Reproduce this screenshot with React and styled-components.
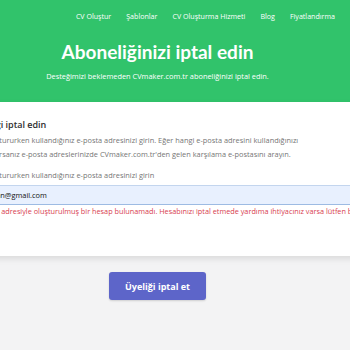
import React from "react";
import styled, { createGlobalStyle } from "styled-components";

const GlobalStyle = createGlobalStyle`
  html, body {
    margin: 0;
    padding: 0;
    background: #f3f3f4;
    overflow: hidden;
  }
  body {
    font-family: "Open Sans", "Noto Sans", sans-serif;
  }
`;

const navItems = [
  "CV Oluştur",
  "Şablonlar",
  "CV Oluşturma Hizmeti",
  "Blog",
  "Fiyatlandırma",
];

export default function App() {
  return (
    <>
      <GlobalStyle />
      <Page>
        <Header>
          <Nav>
            {navItems.map((item) => (
              <NavLink key={item}>{item}</NavLink>
            ))}
          </Nav>
          <Hero>
            <Title>Aboneliğinizi iptal edin</Title>
            <Subtitle>
              Desteğimizi beklemeden CVmaker.com.tr aboneliğinizi iptal edin.
            </Subtitle>
          </Hero>
        </Header>

        <Card>
          <CardTitle>Üyeliği iptal edin</CardTitle>
          <Text>
            CV oluştururken kullandığınız e-posta adresinizi girin. Eğer hangi
            e-posta adresini kullandığınızı
            <br />
            bilmiyorsanız e-posta adreslerinizde CVmaker.com.tr'den gelen
            karşılama e-postasını arayın.
          </Text>
          <Label htmlFor="email">
            CV oluştururken kullandığınız e-posta adresinizi girin
          </Label>
          <Input id="email" type="email" defaultValue="hasan@gmail.com" />
          <Error>
            E-posta adresiyle oluşturulmuş bir hesap bulunamadı. Hesabınızı
            iptal etmede yardıma ihtiyacınız varsa lütfen bizimle iletişime
            geçin.
          </Error>
        </Card>

        <Actions>
          <Button>Üyeliği iptal et</Button>
        </Actions>
      </Page>
    </>
  );
}

const Page = styled.div`
  width: 350px;
  height: 350px;
  overflow: hidden;
  background: #f3f3f4;
`;

const Header = styled.header`
  background: #31c36b;
  height: 102px;
  color: #fff;
`;

const Nav = styled.nav`
  display: flex;
  justify-content: flex-end;
  gap: 15px;
  padding: 9px 15px 0 0;
  height: 14px;
`;

const NavLink = styled.a`
  font-size: 7.1px;
  line-height: 14px;
  color: #fff;
  white-space: nowrap;
  cursor: pointer;
`;

const Hero = styled.div`
  width: 315px;
  text-align: center;
  padding-top: 16px;
`;

const Title = styled.h1`
  margin: 0;
  font-family: Lato, "Open Sans", sans-serif;
  font-size: 19px;
  line-height: 26px;
  font-weight: 700;
`;

const Subtitle = styled.p`
  margin: 5px 0 0;
  font-size: 7.4px;
  line-height: 12px;
`;

const Card = styled.section`
  width: 620px;
  margin-left: -46px;
  padding: 16px 0 39px 20px;
  background: #fff;
  box-shadow: 0 3px 6px rgba(0, 0, 0, 0.1);
`;

const CardTitle = styled.h2`
  margin: 0 0 1px;
  font-size: 9px;
  line-height: 14px;
  font-weight: 600;
  color: #2e2e2e;
`;

const Text = styled.p`
  margin: 0 0 8px;
  font-size: 7.4px;
  line-height: 14px;
  color: #767676;
`;

const Label = styled.label`
  display: block;
  font-size: 7.4px;
  line-height: 12px;
  color: #767676;
  margin-bottom: 4px;
`;

const Input = styled.input`
  display: block;
  box-sizing: border-box;
  width: 100%;
  height: 20px;
  padding: 0 9px;
  border: 1px solid #c3d5ee;
  border-bottom-color: #9dbbe3;
  background: #e8f0fe;
  font-family: inherit;
  font-size: 7.4px;
  color: #111;
  outline: none;
`;

const Error = styled.p`
  margin: 0;
  font-size: 7.3px;
  line-height: 12px;
  color: #d8404f;
  white-space: nowrap;
`;

const Actions = styled.div`
  width: 315px;
  display: flex;
  justify-content: center;
  padding-top: 16px;
`;

const Button = styled.button`
  width: 97px;
  height: 28px;
  border: none;
  border-radius: 3px;
  background: #5d65c9;
  color: #fff;
  font-family: inherit;
  font-size: 9px;
  font-weight: 700;
  box-shadow: 0 1px 2px rgba(0, 0, 0, 0.15);
  cursor: pointer;
`;
